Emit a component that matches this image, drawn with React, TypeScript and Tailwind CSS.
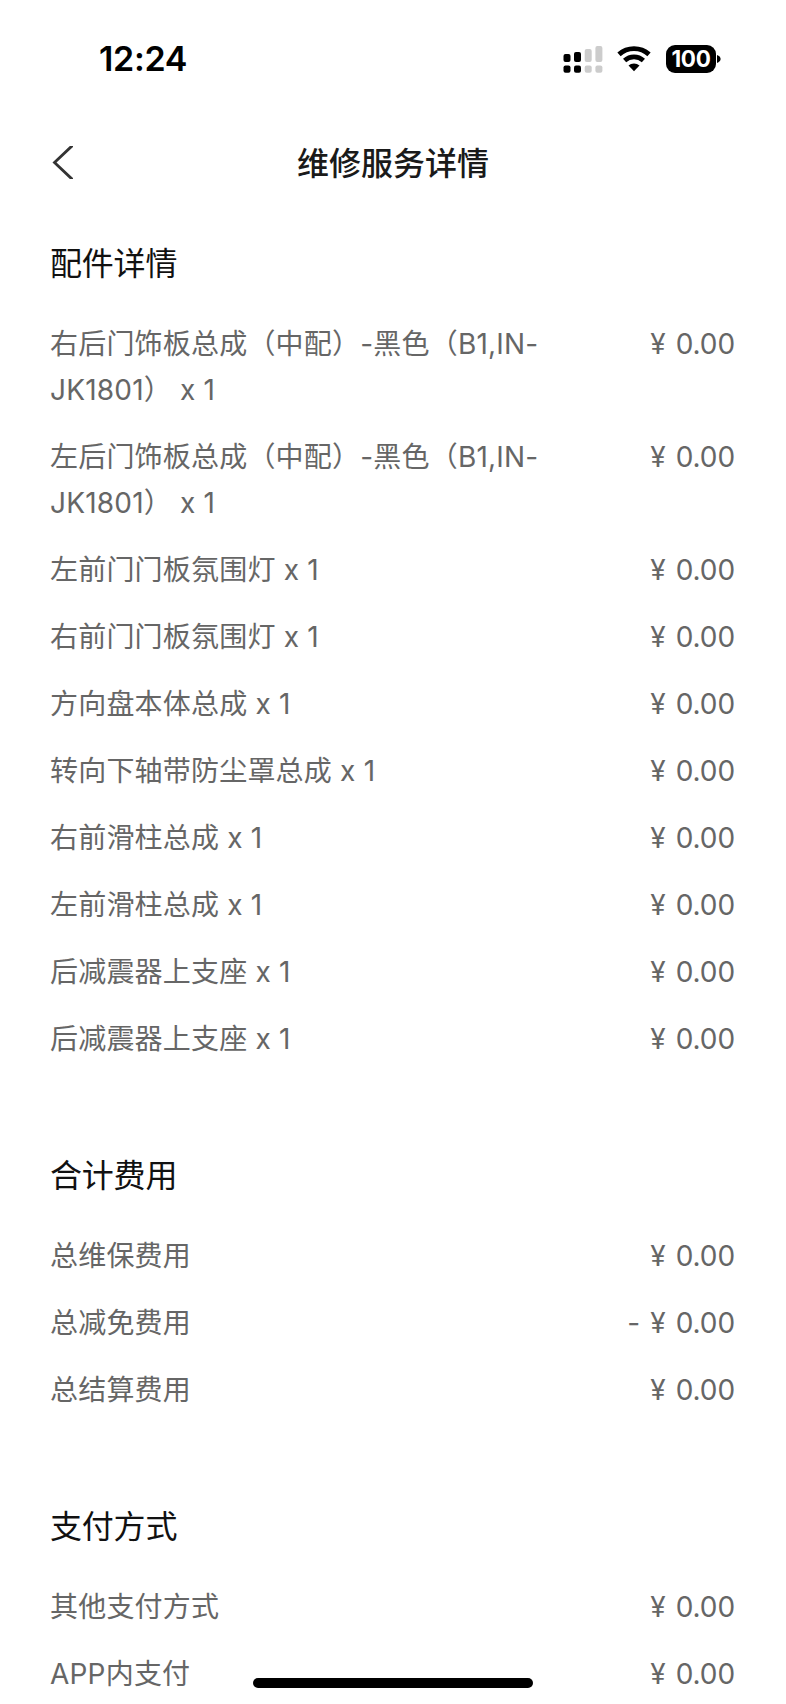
import React from 'react';

interface FeeItem {
  label: string;
  amount: string;
}

interface FeeSection {
  title: string;
  items: FeeItem[];
}

const sections: FeeSection[] = [
  {
    title: '配件详情',
    items: [
      { label: '右后门饰板总成（中配）-黑色（B1,IN-JK1801） x 1', amount: '¥ 0.00' },
      { label: '左后门饰板总成（中配）-黑色（B1,IN-JK1801） x 1', amount: '¥ 0.00' },
      { label: '左前门门板氛围灯 x 1', amount: '¥ 0.00' },
      { label: '右前门门板氛围灯 x 1', amount: '¥ 0.00' },
      { label: '方向盘本体总成 x 1', amount: '¥ 0.00' },
      { label: '转向下轴带防尘罩总成 x 1', amount: '¥ 0.00' },
      { label: '右前滑柱总成 x 1', amount: '¥ 0.00' },
      { label: '左前滑柱总成 x 1', amount: '¥ 0.00' },
      { label: '后减震器上支座 x 1', amount: '¥ 0.00' },
      { label: '后减震器上支座 x 1', amount: '¥ 0.00' },
    ],
  },
  {
    title: '合计费用',
    items: [
      { label: '总维保费用', amount: '¥ 0.00' },
      { label: '总减免费用', amount: '- ¥ 0.00' },
      { label: '总结算费用', amount: '¥ 0.00' },
    ],
  },
  {
    title: '支付方式',
    items: [
      { label: '其他支付方式', amount: '¥ 0.00' },
      { label: 'APP内支付', amount: '¥ 0.00' },
    ],
  },
];

function SignalIcon() {
  return (
    <svg width="40" height="28" viewBox="0 0 40 28">
      {/* SIM 1 bars */}
      <rect x="0.5" y="9" width="7" height="8" rx="2" fill="#000" />
      <rect x="11" y="7" width="7" height="10" rx="2" fill="#000" />
      <rect x="21.7" y="4" width="7" height="13" rx="2" fill="#ccc" />
      <rect x="32.4" y="1" width="7" height="16" rx="2" fill="#ccc" />
      {/* SIM 2 dots */}
      <rect x="0.5" y="20.5" width="7" height="7.3" rx="2" fill="#000" />
      <rect x="11" y="20.5" width="7" height="7.3" rx="2" fill="#000" />
      <rect x="21.7" y="20.5" width="7" height="7.3" rx="2" fill="#ccc" />
      <rect x="32.4" y="20.5" width="7" height="7.3" rx="2" fill="#ccc" />
    </svg>
  );
}

function WifiIcon() {
  return (
    <svg width="34" height="26" viewBox="0 0 34 26" fill="none">
      <path d="M2 8.4A22.4 22.4 0 0 1 32 8.4" stroke="#000" strokeWidth="4.9" />
      <path d="M7.6 14.6A14 14 0 0 1 26.4 14.6" stroke="#000" strokeWidth="4.7" />
      <path d="M11.5 19.6A8 8 0 0 1 22.5 19.6L17 25.3Z" fill="#000" />
    </svg>
  );
}

function BatteryIcon() {
  return (
    <div className="flex items-center gap-[1.5px]">
      <div className="flex h-[28px] w-[50px] items-center justify-center rounded-[9px] bg-black pl-px text-[22.5px] leading-none font-bold tracking-[-0.4px] text-white">
        100
      </div>
      <svg width="4" height="8" viewBox="0 0 4 8">
        <path d="M0 0C2.2 0.8 3.6 2.2 3.6 4C3.6 5.8 2.2 7.2 0 8Z" fill="#000" />
      </svg>
    </div>
  );
}

export default function App() {
  return (
    <div className="relative flex h-[1704px] w-[786px] flex-col overflow-hidden bg-white font-['Inter','Noto_Sans_CJK_SC',sans-serif]">
      <div className="flex h-[118px] shrink-0 items-center justify-between pr-[65px] pl-[99px]">
        <span className="text-[34px] leading-none font-semibold tracking-[-0.3px] text-black">12:24</span>
        <div className="flex items-center">
          <SignalIcon />
          <div className="ml-[14px]">
            <WifiIcon />
          </div>
          <div className="ml-[15px]">
            <BatteryIcon />
          </div>
        </div>
      </div>

      <header className="relative flex h-[90px] shrink-0 items-center justify-center pt-[2px]">
        <button className="absolute top-[28px] left-[52px]">
          <svg width="21" height="33" viewBox="0 0 21 33" fill="none">
            <path d="M22 -2L2.5 16.5L22 35" stroke="#333" strokeWidth="2.8" />
          </svg>
        </button>
        <h1 className="text-[32px] leading-[48px] font-medium text-[#1a1a1a]">维修服务详情</h1>
      </header>

      <main className="flex flex-col gap-[90px] pt-[32px] pr-[51px] pl-[50px]">
        {sections.map((section) => (
          <section key={section.title}>
            <h2 className="mb-[33px] text-[32px] leading-[48px] tracking-[-0.2px] text-[#111]">{section.title}</h2>
            <ul className="flex flex-col gap-[21px] text-[28px] leading-[46px] text-[#666]">
              {section.items.map((item, i) => (
                <li key={i} className="flex items-start justify-between">
                  <span className="w-[510px] tracking-[0.2px]">{item.label}</span>
                  <span className="tracking-[-0.1px] [word-spacing:2.5px]">{item.amount}</span>
                </li>
              ))}
            </ul>
          </section>
        ))}
      </main>

      {/* home indicator */}
      <div className="absolute bottom-[16px] left-[253px] h-[10px] w-[280px] rounded-full bg-black" />
    </div>
  );
}
